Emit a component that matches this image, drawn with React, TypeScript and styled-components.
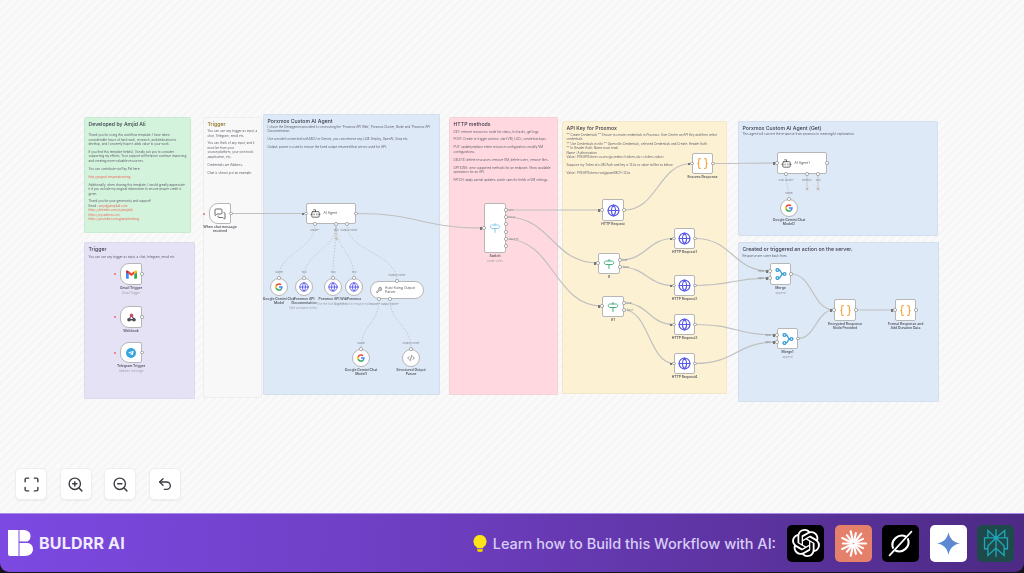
import React from 'react';
import styled, {createGlobalStyle} from 'styled-components';
import {Bot, Braces, CodeXml, Globe, Maximize, MessagesSquare, Signpost, Undo2, Wrench, ZoomIn, ZoomOut} from 'lucide-react';
import {FaTelegramPlane} from 'react-icons/fa';
import {SiOpenai, SiPerplexity} from 'react-icons/si';


type IconKind = 'chat' | 'gmail' | 'webhook' | 'telegram' | 'agent' | 'google' | 'globe' | 'wrench' | 'code' | 'switch' | 'if' | 'braces' | 'merge';
type NoteTone = 'green' | 'lavender' | 'plain' | 'blue' | 'pink' | 'yellow';
type Para = {text: string; link?: boolean; tail?: string; tight?: boolean};

const notes: {x: number; y: number; w: number; h: number; tone: NoteTone; gap: number; title: string; body: Para[]}[] = [
    {x: 84, y: 117, w: 107, h: 116, tone: 'green', gap: 6, title: 'Developed by Amjid Ali', body: [
        {text: 'Thank you for using this workflow template. I have taken considerable hours of hard work, research, and dedication to develop, and I sincerely hope it adds value to your work.'},
        {text: 'If you find this template helpful, I kindly ask you to consider supporting my efforts. Your support will help me continue improving and creating more valuable resources.'},
        {text: 'You can contribute via Pay Pal here:'},
        {text: 'http://paypal.me/pmptraining', link: true},
        {text: 'Additionally, when sharing this template, I would greatly appreciate it if you include my original information to ensure proper credit is given.'},
        {text: 'Thank you for your generosity and support!\nEmail : ', tail: 'amjid@amjidali.com', tight: true},
        {text: 'https://linkedin.com/in/amjidali\nhttps://sysadmin.com\nhttps://youtube.com/@pmptraining', link: true},
    ]},
    {x: 84, y: 242, w: 111, h: 157, tone: 'lavender', gap: 2.8, title: 'Trigger', body: [
        {text: 'You can use any trigger as input, a chat, telegram, email etc'},
    ]},
    {x: 203, y: 117, w: 59, h: 281, tone: 'plain', gap: 2, title: 'Trigger', body: [
        {text: 'You can use any trigger as input, a chat, Telegram, email etc.'},
        {text: 'You can think of any input, and it must be from your source/platform, your own tools /application, etc.'},
        {text: 'Credentials are Address.'},
        {text: 'Chat is shown just an example.'},
    ]},
    {x: 263, y: 114, w: 177, h: 281, tone: 'blue', gap: .5, title: 'Porxmox Custom AI Agent', body: [
        {text: 'I chose the Deepgemini provided it is executing the \'Proxmox API Web\', Proxmox Cluster, Node and \'Proxmox API Documentation.'},
        {text: 'Use a model connected with MCU or Gemini, you can retrieve any LLM: Deploy, OpenAI, Groq etc.'},
        {text: 'Output: parser is used to ensure the fixed output returned that serves used for API.'},
    ]},
    {x: 449, y: 117, w: 109, h: 278, tone: 'pink', gap: 2.6, title: 'HTTP methods', body: [
        {text: 'GET: retrieve resources: node list status, list tasks, get logs.'},
        {text: 'POST: Create or trigger actions: start VM, LXCs, create backups.'},
        {text: 'PUT: update/replace entire resource configuration: modify VM configurations.'},
        {text: 'DELETE: delete resources: remove VM, delete users, remove files.'},
        {text: 'OPTIONS: view supported methods for an endpoint: Show available operations for an API.'},
        {text: 'PATCH: apply partial updates: patch specific fields in VM settings.'},
    ]},
    {x: 562, y: 121, w: 165, h: 273, tone: 'yellow', gap: 1.5, title: 'API Key for Proxmox', body: [
        {text: '** Create Credentials ** Ensure to create credentials in Proxmox: User Center an API Key and then select credentials.\n** Use Credentials in n8n ** Open n8n Credentials, selected Credentials and Create: Header Auth\n** In Header Auth: Name must read:\nName : Authorization\nValue : PVEAPIToken=<user>@<realm>!<token-id>=<token-value>'},
        {text: 'Suppose my Token id is MCAuth and key is 123a so value will be as below:'},
        {text: 'Value : PVEAPIToken=root@pam!MCP=123a'},
    ]},
    {x: 738, y: 121, w: 200, h: 115, tone: 'blue', gap: 1, title: 'Porxmox Custom AI Agent (Get)', body: [
        {text: 'This agent will convert the response from proxmox to meaningful explanation.'},
    ]},
    {x: 738, y: 242, w: 201, h: 160, tone: 'blue', gap: 2.2, title: 'Created or triggered an action on the server.', body: [
        {text: 'Response are come back from.'},
    ]},
];

const nodes: {x: number; y: number; w: number; h: number; icon: IconKind; label?: string; sub?: string; shape?: 'trigger' | 'circle' | 'pill' | 'wide'; text?: string}[] = [
    {x: 209, y: 203, w: 22, h: 21, icon: 'chat', label: 'When chat message received', shape: 'trigger'},
    {x: 120, y: 263, w: 22, h: 22, icon: 'gmail', label: 'Gmail Trigger', sub: 'Gmail Trigger', shape: 'trigger'},
    {x: 120, y: 306, w: 22, h: 22, icon: 'webhook', label: 'Webhook', shape: 'trigger'},
    {x: 120, y: 342, w: 22, h: 21, icon: 'telegram', label: 'Telegram Trigger', sub: 'Updates: message', shape: 'trigger'},
    {x: 306, y: 203, w: 50, h: 21, icon: 'agent', text: 'AI Agent', shape: 'wide'},
    {x: 270, y: 278, w: 18, h: 18, icon: 'google', label: 'Google Gemini Chat Model', shape: 'circle'},
    {x: 295, y: 278, w: 18, h: 18, icon: 'globe', label: 'Porxmox API Documentation', sub: 'Take a request to the...', shape: 'circle'},
    {x: 324, y: 278, w: 18, h: 18, icon: 'globe', label: 'Porxmox API Wiki', sub: 'Use the tool to get the...', shape: 'circle'},
    {x: 345, y: 278, w: 18, h: 18, icon: 'globe', label: 'Porxmox', sub: 'Use the tool to request node...', shape: 'circle'},
    {x: 370, y: 281, w: 54, h: 18, icon: 'wrench', text: 'Auto-fixing Output Parser', shape: 'pill'},
    {x: 352, y: 349, w: 18, h: 18, icon: 'google', label: 'Google Gemini Chat Model1', shape: 'circle'},
    {x: 402, y: 349, w: 18, h: 18, icon: 'code', label: 'Structured Output Parser', shape: 'circle'},
    {x: 484, y: 203, w: 22, h: 50, icon: 'switch', label: 'Switch', sub: 'mode: rules'},
    {x: 602, y: 199, w: 22, h: 22, icon: 'globe', label: 'HTTP Request'},
    {x: 692, y: 153, w: 21, h: 21, icon: 'braces', label: 'Ensures Response'},
    {x: 598, y: 253, w: 22, h: 21, icon: 'if', label: 'If'},
    {x: 602, y: 296, w: 22, h: 21, icon: 'if', label: 'If1'},
    {x: 674, y: 228, w: 21, h: 21, icon: 'globe', label: 'HTTP Request1'},
    {x: 674, y: 275, w: 21, h: 21, icon: 'globe', label: 'HTTP Request2'},
    {x: 674, y: 314, w: 21, h: 21, icon: 'globe', label: 'HTTP Request3'},
    {x: 674, y: 353, w: 21, h: 21, icon: 'globe', label: 'HTTP Request4'},
    {x: 770, y: 263, w: 21, h: 22, icon: 'merge', label: 'Merge', sub: 'append'},
    {x: 777, y: 328, w: 21, h: 21, icon: 'merge', label: 'Merge1', sub: 'append'},
    {x: 834, y: 299, w: 22, h: 22, icon: 'braces', label: 'Encrypted Response Node Provided'},
    {x: 895, y: 299, w: 21, h: 22, icon: 'braces', label: 'Format Response and Add Duration Data'},
    {x: 777, y: 152, w: 50, h: 22, icon: 'agent', text: 'AI Agent1', shape: 'wide'},
    {x: 780, y: 199, w: 18, h: 18, icon: 'google', label: 'Google Gemini Chat Model2', shape: 'circle'},
];

const wires: number[][] = [
    [231, 213.5, 306, 213.5],
    [356, 213.5, 484, 228],
    [506, 210, 602, 210],
    [506, 217, 598, 263],
    [506, 239, 602, 306],
    [624, 210, 692, 163.5],
    [713, 163.5, 777, 163],
    [620, 260, 674, 238.5],
    [620, 267, 674, 285.5],
    [624, 303, 674, 324.5],
    [624, 310, 674, 363.5],
    [695, 238.5, 770, 271],
    [695, 285.5, 770, 278],
    [695, 324.5, 777, 335],
    [695, 363.5, 777, 342],
    [791, 274, 834, 310],
    [798, 338.5, 834, 310],
    [856, 310, 895, 310],
];

const dashedWires: number[][] = [
    [315, 224, 279, 278],
    [336, 224, 304, 278],
    [336, 224, 333, 278],
    [336, 224, 354, 278],
    [347, 224, 397, 281],
    [379, 299, 361, 349],
    [390, 299, 411, 349],
    [786, 174, 789, 199],
];

const outPorts: number[][] = [
    [231, 213.5], [142, 274], [142, 317], [142, 352.5], [356, 213.5], [827, 163],
    [506, 210], [506, 217], [506, 224], [506, 232], [506, 239], [506, 246],
    [624, 210], [713, 163.5], [620, 260], [620, 267], [624, 303], [624, 310],
    [695, 238.5], [695, 285.5], [695, 324.5], [695, 363.5],
    [791, 274], [798, 338.5], [856, 310], [916, 310],
    [315, 224], [336, 224], [347, 224], [786, 174], [807, 174], [818, 174],
    [379, 299], [390, 299],
    [279, 278], [304, 278], [333, 278], [354, 278], [397, 281], [361, 349], [411, 349], [789, 199],
];

const inPorts: number[][] = [
    [306, 213.5], [484, 228], [602, 210], [692, 163.5], [777, 163], [598, 263], [602, 306],
    [674, 238.5], [674, 285.5], [674, 324.5], [674, 363.5],
    [770, 271], [770, 278], [777, 335], [777, 342], [834, 310], [895, 310],
];

const edgeLabels: {x: number; y: number; text: string}[] = [
    {x: 315, y: 229.5, text: 'Model*'}, {x: 336, y: 229.5, text: 'Tool'}, {x: 349, y: 229.5, text: 'Output Parser'},
    {x: 279, y: 272, text: 'Model'}, {x: 304, y: 272, text: 'Tool'}, {x: 333, y: 272, text: 'Tool'}, {x: 354, y: 272, text: 'Tool'},
    {x: 397, y: 275, text: 'Output Parser'}, {x: 385, y: 304, text: 'Model*  Output Parser*'},
    {x: 361, y: 343, text: 'Model'}, {x: 411, y: 343, text: 'Output Parser'},
    {x: 511, y: 210, text: 'GET'}, {x: 512, y: 217, text: 'POST'}, {x: 514, y: 239, text: 'DELETE'},
    {x: 625, y: 260, text: 'true'}, {x: 626, y: 267, text: 'false'}, {x: 629, y: 303, text: 'true'}, {x: 630, y: 310, text: 'false'},
    {x: 786, y: 179.5, text: 'Chat Model*'}, {x: 807, y: 179.5, text: 'Memory'}, {x: 818, y: 179.5, text: 'Tool'}, {x: 789, y: 193, text: 'Model'},
    {x: 762, y: 271, text: 'Input 1'}, {x: 762, y: 278, text: 'Input 2'}, {x: 769, y: 335, text: 'Input 1'}, {x: 769, y: 342, text: 'Input 2'},
];

// x, y of the plus box and the port it hangs from
const plusMarks: number[][] = [[336, 239, 224], [807, 189, 174], [818, 189, 174]];
const triggerStars: number[][] = [[204, 213.5], [115, 274], [115, 317], [115, 352.5]];

const hCurve = ([x1, y1, x2, y2]: number[]) => {
    const mid = Math.max(Math.abs(x2 - x1) / 2, 10);
    return `M${x1} ${y1}C${x1 + mid} ${y1} ${x2 - mid} ${y2} ${x2} ${y2}`;
};

const vCurve = ([x1, y1, x2, y2]: number[]) => {
    const mid = Math.abs(y2 - y1) / 2;
    return `M${x1} ${y1}C${x1} ${y1 + mid} ${x2} ${y2 - mid} ${x2} ${y2}`;
};

const GoogleG = ({size}: {size: number}) => (
    <svg width={size} height={size} viewBox="0 0 24 24">
        <path fill="#4285f4" d="M23 12.3c0-.8-.1-1.6-.2-2.3H12v4.4h6.2c-.3 1.4-1.1 2.6-2.3 3.4v2.8h3.7c2.1-2 3.4-4.9 3.4-8.3z"/>
        <path fill="#34a853" d="M12 23.5c3.1 0 5.7-1 7.6-2.8l-3.7-2.9c-1 .7-2.4 1.1-3.9 1.1-3 0-5.5-2-6.4-4.7H1.8v2.9c1.9 3.8 5.8 6.4 10.2 6.4z"/>
        <path fill="#fbbc05" d="M5.6 14.2c-.5-1.4-.5-3 0-4.4V6.9H1.8c-1.6 3.2-1.6 7 0 10.2l3.8-2.9z"/>
        <path fill="#ea4335" d="M12 5c1.7 0 3.2.6 4.4 1.7l3.3-3.3C17.7 1.6 15.1.5 12 .5 7.6.5 3.7 3.1 1.8 6.9l3.8 2.9C6.5 7 9 5 12 5z"/>
    </svg>
);

const GmailM = () => (
    <svg width="11" height="9" viewBox="0 0 24 18">
        <path fill="#4285f4" d="M0 3v13.5A1.5 1.5 0 0 0 1.5 18H6V8z"/>
        <path fill="#34a853" d="M18 8v10h4.5a1.500 1.500 0 0 0 1.500-1.500V3z"/>
        <path fill="#ea4335" d="M6 8V2l6 4.500L18 2v6l-6 4.500z"/>
        <path fill="#c5221f" d="M0 3v1l6 4V2L3.500.5C2 -.5 0 .5 0 3z"/>
        <path fill="#fbbc04" d="M24 3v1l-6 4V2l2.500-1.500C22-.5 24 .5 24 3z"/>
    </svg>
);

const WebhookMark = () => (
    <svg width="9" height="9" viewBox="0 0 24 24" fill="none" strokeWidth="3.5" strokeLinecap="round">
        <path stroke="#c94f6d" d="M12 5l-5 10"/>
        <path stroke="#4a4a55" d="M5 18h13"/>
        <path stroke="#4a4a55" d="M12 6l6 10"/>
        <circle cx="12" cy="6" r="4.5" fill="#c94f6d"/>
        <circle cx="5" cy="18" r="4.5" fill="#4a4a55"/>
        <circle cx="19" cy="18" r="4.5" fill="#4a4a55"/>
    </svg>
);

const MergeMark = () => (
    <svg width="12" height="12" viewBox="0 0 24 24" fill="none" stroke="#3f9fd6" strokeWidth="2.800">
        <circle cx="5" cy="4" r="2.800"/>
        <circle cx="5" cy="20" r="2.800"/>
        <circle cx="19" cy="12" r="2.800"/>
        <path d="M7.800 4c5 0 3 8 8.400 8M7.800 20c5 0 3-8 8.400-8"/>
    </svg>
);

const ClaudeMark = () => (
    <svg width="27" height="27" viewBox="0 0 28 28" stroke="#fff" strokeWidth="2.200" strokeLinecap="round">
        {Array.from({length: 14}).map((_, i) => {
            const angle = (i / 14) * Math.PI * 2;
            const reach = i % 2 ? 11 : 13;
            return (
                <line
                    key={i}
                    x1={14 + Math.cos(angle) * 2}
                    y1={14 + Math.sin(angle) * 2}
                    x2={14 + Math.cos(angle) * reach}
                    y2={14 + Math.sin(angle) * reach}
                />
            );
        })}
    </svg>
);

const GrokMark = () => (
    <svg width="29" height="29" viewBox="0 0 28 28" fill="none" stroke="#fff">
        <path strokeWidth="2" d="M19.500 7.500A9 9 0 0 0 7 19M8.500 20.500A9 9 0 0 0 21 9"/>
        <path strokeWidth="1.600" d="M3 26L25 2"/>
    </svg>
);

const GeminiMark = () => (
    <svg width="25" height="25" viewBox="0 0 24 24">
        <defs>
            <linearGradient id="gemini" x1="0" y1="1" x2="1" y2="0">
                <stop offset="0" stopColor="#4a8fdc"/>
                <stop offset="1" stopColor="#6f82c8"/>
            </linearGradient>
        </defs>
        <path fill="url(#gemini)" d="M12 1c1 6 4.500 10 11 11-6.500 1-10 5-11 11-1-6-4.500-10-11-11 6.500-1 10-5 11-11z"/>
    </svg>
);

const BuldrrMark = () => (
    <svg width="25" height="26" viewBox="0 0 25 26" fill="#fff">
        <path d="M0 0h10.500v26H2a2 2 0 0 1-2-2z"/>
        <path d="M11.500 0h3.500c5 0 7.500 2.500 7.500 6 0 2.500-1 4.500-3 5.500h-8z"/>
        <path d="M11.500 13H20c3 .5 5 2.500 5 6 0 4-3 7-8 7h-5.500z"/>
    </svg>
);

const renderNodeIcon = (kind: IconKind, circle: boolean) => {
    const size = circle ? 10 : 13;
    switch (kind) {
        case 'chat': return <MessagesSquare size={12} color="#4a4a4a" strokeWidth={1.6}/>;
        case 'gmail': return <GmailM/>;
        case 'webhook': return <WebhookMark/>;
        case 'telegram': return <TelegramBadge><FaTelegramPlane size={6} color="#fff"/></TelegramBadge>;
        case 'agent': return <Bot size={11} color="#444" strokeWidth={1.7}/>;
        case 'google': return <GoogleG size={8}/>;
        case 'globe': return <Globe size={size} color="#5858e8" strokeWidth={2.2}/>;
        case 'wrench': return <Wrench size={8} color="#555" strokeWidth={2.4}/>;
        case 'code': return <CodeXml size={8} color="#555" strokeWidth={2}/>;
        case 'switch': return <Signpost size={12} color="#7cc4ef" strokeWidth={1.8}/>;
        case 'if': return <Signpost size={12} color="#45ad7f" strokeWidth={2}/>;
        case 'braces': return <Braces size={13} color="#f2a23c" strokeWidth={2}/>;
        case 'merge': return <MergeMark/>;
    }
};

const App = () => {
    return <Page>
        <GlobalStyle/>

        <Canvas>
            <Board>
                {notes.map((note) => (
                    <Note key={note.title + note.x} $x={note.x} $y={note.y} $w={note.w} $h={note.h} $tone={note.tone}>
                        <NoteTitle $tone={note.tone} $gap={note.gap}>{note.title}</NoteTitle>
                        {note.body.map((para) => (
                            <NoteText key={para.text} $link={para.link} $tight={para.tight}>
                                {para.text}
                                {para.tail && <NoteLink>{para.tail}</NoteLink>}
                            </NoteText>
                        ))}
                    </Note>
                ))}

                <WireLayer width="1024" height="513" viewBox="0 0 1024 513" fill="none">
                    {wires.map((wire) => (
                        <path key={wire.join()} d={hCurve(wire)} stroke="#c0c0c0" strokeWidth="1.2"/>
                    ))}
                    {dashedWires.map((wire) => (
                        <path key={wire.join()} d={vCurve(wire)} stroke="#b9b9b9" strokeWidth=".7" strokeDasharray="1.500 1.500"/>
                    ))}
                    {plusMarks.map(([x, y, from]) => (
                        <path key={`${x}${y}`} d={`M${x} ${from}V${y}`} stroke="#bdbdbd" strokeWidth=".7"/>
                    ))}
                </WireLayer>

                {nodes.map((node) => (
                    <Node key={`${node.x}-${node.y}`} $x={node.x} $y={node.y} $w={node.w} $h={node.h} $shape={node.shape}>
                        {renderNodeIcon(node.icon, node.shape === 'circle')}
                        {node.text && <NodeText>{node.text}</NodeText>}
                        {node.label && (
                            <NodeCaption>
                                {node.label}
                                {node.sub && <NodeSub>{node.sub}</NodeSub>}
                            </NodeCaption>
                        )}
                    </Node>
                ))}

                {inPorts.map(([x, y]) => (
                    <InPort key={`${x}-${y}`} $x={x} $y={y}/>
                ))}
                {outPorts.map(([x, y]) => (
                    <Port key={`${x}-${y}`} $x={x} $y={y}/>
                ))}
                {plusMarks.map(([x, y]) => (
                    <PlusMark key={`${x}-${y}`} $x={x} $y={y}>+</PlusMark>
                ))}
                {triggerStars.map(([x, y]) => (
                    <TriggerStar key={`${x}-${y}`} $x={x} $y={y}/>
                ))}
                {edgeLabels.map((item) => (
                    <EdgeLabel key={`${item.x}-${item.y}`} $x={item.x} $y={item.y}>{item.text}</EdgeLabel>
                ))}
            </Board>

            <Controls>
                <ControlButton aria-label="Fit view"><Maximize size={17} strokeWidth={2}/></ControlButton>
                <ControlButton aria-label="Zoom in"><ZoomIn size={17} strokeWidth={2}/></ControlButton>
                <ControlButton aria-label="Zoom out"><ZoomOut size={17} strokeWidth={2}/></ControlButton>
                <ControlButton aria-label="Undo"><Undo2 size={16} strokeWidth={2}/></ControlButton>
            </Controls>
        </Canvas>

        <Footer>
            <Brand>
                <BuldrrMark/>
                <BrandName>BULDRR AI</BrandName>
            </Brand>

            <Promo>
                <Bulb>
                    <svg width="14" height="17" viewBox="0 0 14 17">
                        <path fill="#ffe31a" d="M7 0a6.500 6.500 0 0 0-3.600 11.900c.5.400.6.800.7 1.400h5.800c.1-.6.200-1 .7-1.400A6.500 6.500 0 0 0 7 0z"/>
                        <path fill="#e6c800" d="M4.200 14h5.600v1.200c0 1-.8 1.800-1.800 1.800H6c-1 0-1.800-.8-1.800-1.800z"/>
                    </svg>
                </Bulb>
                <PromoText>Learn how to Build this Workflow with AI:</PromoText>
                <AiList>
                    <AiTile $bg="#000"><SiOpenai size={28} color="#fff"/></AiTile>
                    <AiTile $bg="#e5806a"><ClaudeMark/></AiTile>
                    <AiTile $bg="#000"><GrokMark/></AiTile>
                    <AiTile $bg="#fff"><GeminiMark/></AiTile>
                    <AiTile $bg="#1e4a4c"><SiPerplexity size={28} color="#1fa6b8"/></AiTile>
                </AiList>
            </Promo>
        </Footer>
    </Page>;
};

export default App;


type Place = {$x: number; $y: number};
type Box = Place & {$w: number; $h: number};

const noteBg: Record<NoteTone, string> = {
    green: '#d3f3dc',
    lavender: '#e6e2f6',
    plain: '#f8f8f8',
    blue: '#dde9f7',
    pink: '#ffd9df',
    yellow: '#fdf1d3',
};

const GlobalStyle = createGlobalStyle`
    html, body {
        margin: 0;
        padding: 0;
        background: #16131c;
        font-family: Inter, "Liberation Sans", sans-serif;
    }
`;

const Page = styled.div`
    display: flex;
    flex-direction: column;
    width: 1024px;
    height: 572px;
    overflow: hidden;
    border-radius: 0 0 9px 9px;
`;

const Canvas = styled.div`
    position: relative;
    flex: 1;
    background: repeating-linear-gradient(135deg, #f6f6f6 0 3px, #fafafa 3px 6px);
`;

const Board = styled.div`
    position: absolute;
    inset: 0;
    filter: blur(.4px);
`;

const Note = styled.div<Box & {$tone: NoteTone}>`
    position: absolute;
    left: ${(p) => p.$x}px;
    top: ${(p) => p.$y}px;
    width: ${(p) => p.$w}px;
    height: ${(p) => p.$h}px;
    box-sizing: border-box;
    padding: 2.5px 3px 2.5px 3.5px;
    border-radius: 1.5px;
    background: ${(p) => noteBg[p.$tone]};
    border: .5px solid rgba(0, 0, 0, .04);
    overflow: hidden;
`;

const NoteTitle = styled.div<{$tone: NoteTone; $gap: number}>`
    margin-bottom: ${(p) => p.$gap}px;
    font-size: 5.2px;
    line-height: 6.5px;
    font-weight: 500;
    color: ${(p) => (p.$tone === 'plain' ? '#8a6d1f' : '#3c3c4a')};
`;

const NoteText = styled.p<{$link?: boolean; $tight?: boolean}>`
    margin: 0 0 ${(p) => (p.$tight ? 0 : 3.4)}px;
    font-size: 3.05px;
    line-height: 4.5px;
    white-space: pre-line;
    color: ${(p) => (p.$link ? '#ef6b5f' : '#62626e')};
`;

const NoteLink = styled.span`
    color: #ef6b5f;
`;

const WireLayer = styled.svg`
    position: absolute;
    left: 0;
    top: 0;
`;

const Node = styled.div<Box & {$shape?: 'trigger' | 'circle' | 'pill' | 'wide'}>`
    position: absolute;
    left: ${(p) => p.$x}px;
    top: ${(p) => p.$y}px;
    width: ${(p) => p.$w}px;
    height: ${(p) => p.$h}px;
    box-sizing: border-box;
    display: flex;
    align-items: center;
    justify-content: ${(p) => (p.$shape === 'wide' || p.$shape === 'pill' ? 'flex-start' : 'center')};
    gap: ${(p) => (p.$shape === 'pill' ? 3 : 3)}px;
    padding: ${(p) => (p.$shape === 'wide' ? '0 0 0 2.5px' : p.$shape === 'pill' ? '0 4px 0 4.5px' : '0')};
    background: #fff;
    border: 1px solid #b6b6b6;
    border-radius: ${(p) => {
        if (p.$shape === 'circle' || p.$shape === 'pill') return '20px';
        if (p.$shape === 'trigger') return '9px 2px 2px 9px';
        return '2px';
    }};
`;

const NodeText = styled.span`
    font-size: 3.4px;
    line-height: 4.5px;
    color: #555;
`;

const NodeCaption = styled.div`
    position: absolute;
    left: 50%;
    top: calc(100% + 2px);
    width: 40px;
    transform: translateX(-50%);
    text-align: center;
    font-size: 3.4px;
    line-height: 4px;
    font-weight: 600;
    color: #55555f;
`;

const NodeSub = styled.div`
    margin-top: .5px;
    font-size: 2.8px;
    font-weight: 400;
    color: #a0a0a8;
`;

const Port = styled.span<Place>`
    position: absolute;
    left: ${(p) => p.$x - 1.75}px;
    top: ${(p) => p.$y - 1.75}px;
    width: 3.5px;
    height: 3.5px;
    box-sizing: border-box;
    background: #fff;
    border: .7px solid #9c9c9c;
    border-radius: 50%;
`;

const InPort = styled(Port)`
    &::before {
        content: '';
        position: absolute;
        left: -3.4px;
        top: .1px;
        width: 2.2px;
        height: 2.2px;
        background: #777;
    }
`;

const PlusMark = styled.span<Place>`
    position: absolute;
    left: ${(p) => p.$x - 2}px;
    top: ${(p) => p.$y - 2}px;
    width: 4px;
    height: 4px;
    display: flex;
    align-items: center;
    justify-content: center;
    font-size: 4px;
    line-height: 4px;
    color: #666;
    background: #ddd;
    border-radius: .8px;
`;

const TriggerStar = styled.span<Place>`
    position: absolute;
    left: ${(p) => p.$x - 1}px;
    top: ${(p) => p.$y - 1}px;
    width: 2px;
    height: 2px;
    background: #ef6b6b;
    border-radius: 50%;
`;

const EdgeLabel = styled.span<Place>`
    position: absolute;
    left: ${(p) => p.$x}px;
    top: ${(p) => p.$y}px;
    transform: translate(-50%, -50%);
    font-size: 2.6px;
    line-height: 3px;
    white-space: nowrap;
    color: #85858f;
`;

const TelegramBadge = styled.span`
    width: 10px;
    height: 10px;
    display: flex;
    align-items: center;
    justify-content: center;
    border-radius: 50%;
    background: #36a6dd;
`;

const Controls = styled.div`
    position: absolute;
    left: 15px;
    bottom: 13px;
    display: flex;
    gap: 12.5px;
`;

const ControlButton = styled.button`
    width: 32px;
    height: 32px;
    padding: 0;
    display: flex;
    align-items: center;
    justify-content: center;
    color: #3d3d44;
    background: #fff;
    border: 1px solid #eeeeee;
    border-radius: 5px;
    box-shadow: 0 1px 2px rgba(0, 0, 0, .06);
`;

const Footer = styled.footer`
    flex: none;
    height: 59px;
    box-sizing: border-box;
    display: flex;
    align-items: center;
    justify-content: space-between;
    padding: 0 10px 0 8px;
    background: linear-gradient(95deg, #7c49e2 0%, #6c3dbd 45%, #4d2a84 100%);
    border-top: 1px solid #a78be8;
`;

const Brand = styled.div`
    display: flex;
    align-items: center;
    gap: 6px;
`;

const BrandName = styled.span`
    font-size: 16px;
    font-weight: 700;
    letter-spacing: .2px;
    color: #f1ebff;
`;

const Promo = styled.div`
    display: flex;
    align-items: center;
`;

const Bulb = styled.span`
    display: flex;
    margin-right: 6px;
`;

const PromoText = styled.span`
    margin-right: 11px;
    font-size: 14.5px;
    font-weight: 500;
    color: #d9cdf6;
`;

const AiList = styled.div`
    display: flex;
    gap: 10.5px;
`;

const AiTile = styled.span<{$bg: string}>`
    width: 37px;
    height: 37px;
    display: flex;
    align-items: center;
    justify-content: center;
    border-radius: 5px;
    background: ${(p) => p.$bg};
`;
